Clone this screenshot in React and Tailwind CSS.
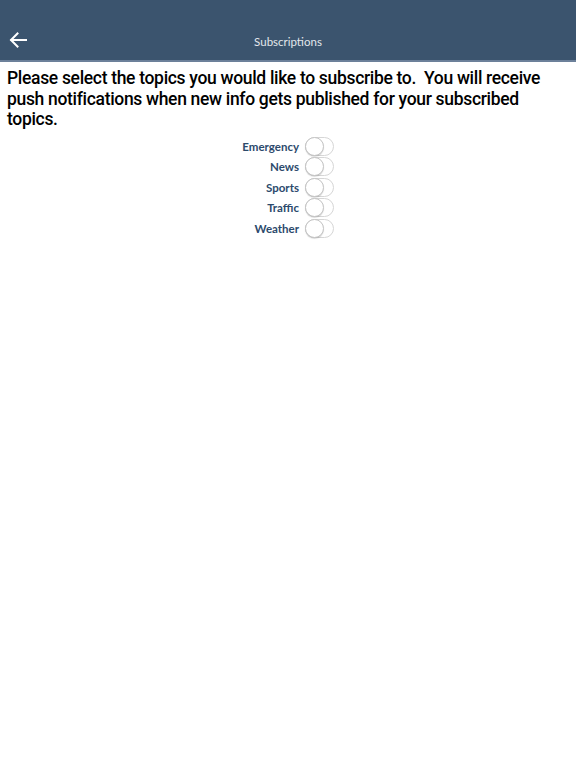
import React from 'react';

const topics = ['Emergency', 'News', 'Sports', 'Traffic', 'Weather'];

function Toggle() {
  return (
    <div className="relative w-[29px] h-[19px] rounded-full border border-[#d6d6d6] bg-white">
      <div className="absolute left-[-1px] top-[-1px] w-[19px] h-[19px] rounded-full bg-white border border-[#c4c4c4] shadow-[0_1px_1px_rgba(0,0,0,0.15)]" />
    </div>
  );
}

export default function App() {
  return (
    <div className="min-h-[768px] bg-white">
      {/* Navigation bar */}
      <header className="h-[62px] bg-[#3b546e] border-b-2 border-[#6c809a] flex items-end pb-[10px] relative">
        <button className="absolute left-[9px] bottom-[12px] text-white">
          <svg width="18" height="16" viewBox="0 0 18 16" fill="none" stroke="currentColor" strokeWidth="2" strokeLinecap="square">
            <path d="M17 8H2.5" />
            <path d="M8.5 1.5L2 8l6.5 6.5" />
          </svg>
        </button>
        <h1 className="w-full text-center text-[11.5px] text-[#e3e7ec]" style={{ fontFamily: 'Lato, sans-serif' }}>
          Subscriptions
        </h1>
      </header>

      <p className="px-[7px] pt-[6px] text-[17.5px] leading-[20.6px] tracking-[-0.32px] font-medium text-black" style={{ fontFamily: 'Roboto, sans-serif' }}>
        Please select the topics you would like to subscribe to.&nbsp; You will receive push notifications when new info gets published for your subscribed topics.
      </p>

      <div className="mt-[7px] flex flex-col items-center gap-[1.5px]">
        {topics.map((t) => (
          <div key={t} className="flex items-center gap-[6px] h-[19px]">
            <span className="w-[57px] whitespace-nowrap flex justify-end text-[11.5px] font-bold text-[#2c4a6c]" style={{ fontFamily: 'Lato, sans-serif' }}>
              {t}
            </span>
            <Toggle />
          </div>
        ))}
      </div>
    </div>
  );
}
